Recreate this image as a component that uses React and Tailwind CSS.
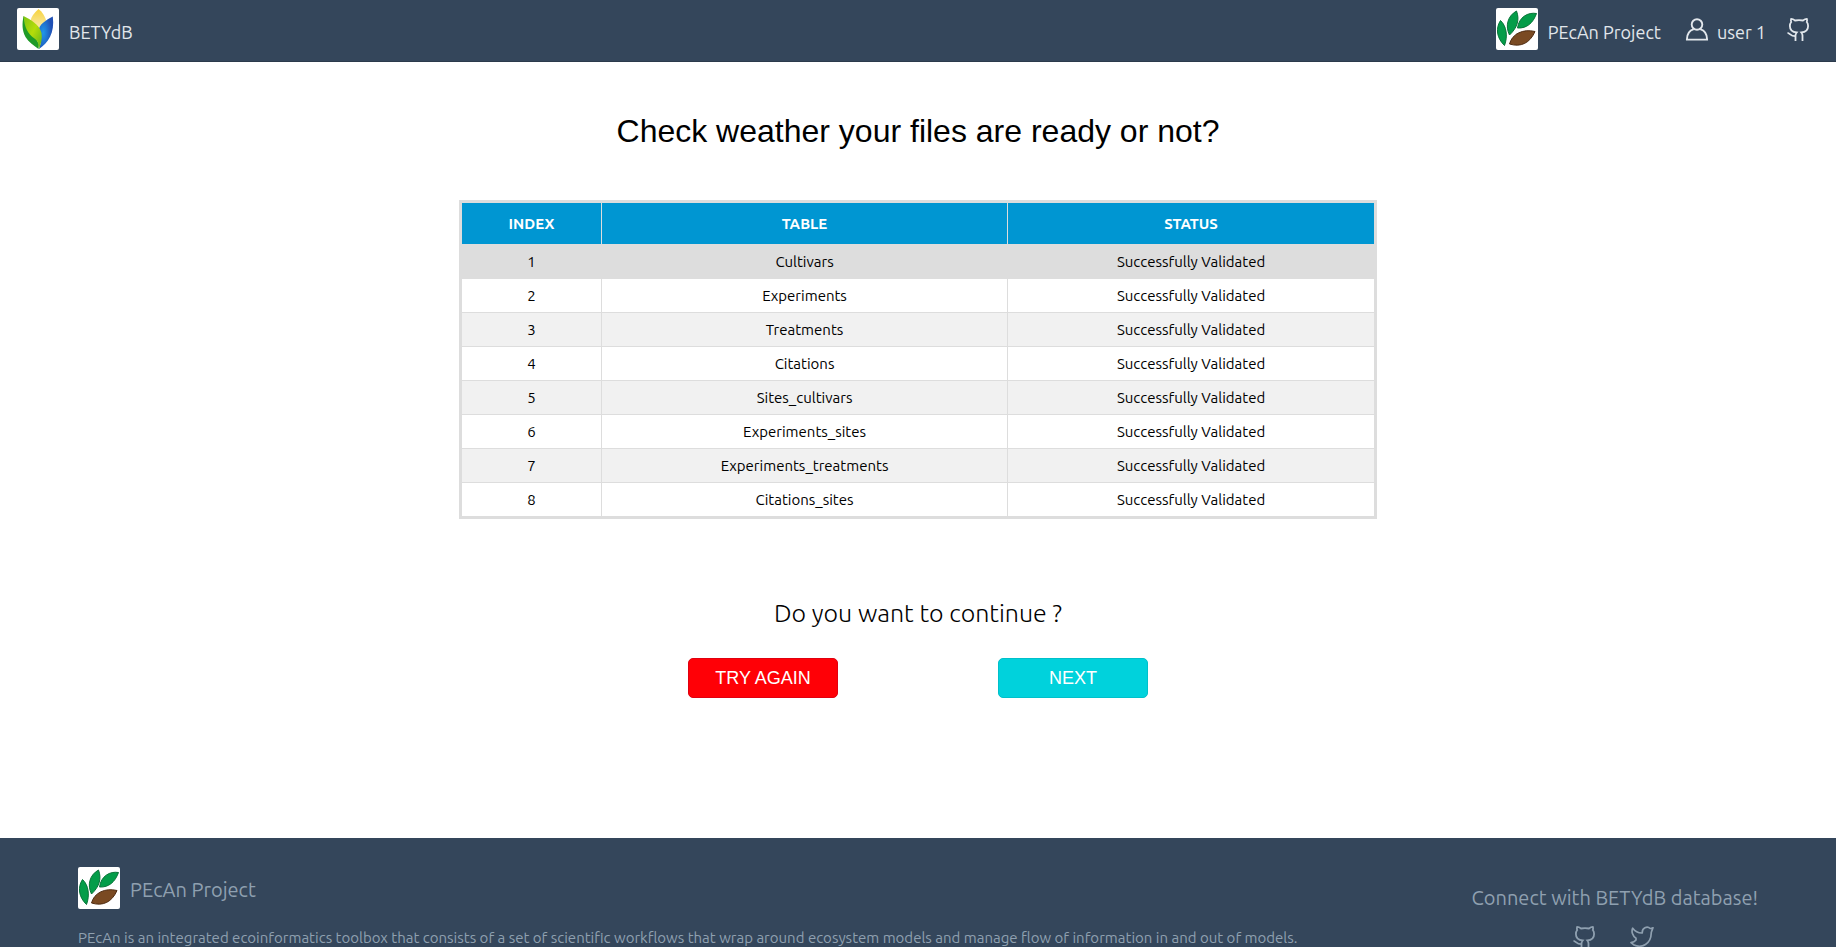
const tables = [
  "Cultivars",
  "Experiments",
  "Treatments",
  "Citations",
  "Sites_cultivars",
  "Experiments_sites",
  "Experiments_treatments",
  "Citations_sites",
];

function BetyLogo() {
  return (
    <svg viewBox="0 0 42 42" className="size-[42px] shrink-0 rounded-xs bg-white" aria-hidden="true">
      <defs>
        <linearGradient id="bety-yellow" x1="0" y1="0" x2="0" y2="1">
          <stop offset="0" stopColor="#f7d33c" />
          <stop offset="1" stopColor="#f8e9a8" />
        </linearGradient>
        <radialGradient id="bety-blue" cx="0.3" cy="0.5" r="0.6">
          <stop offset="0" stopColor="#1f97ea" />
          <stop offset="1" stopColor="#2050b4" />
        </radialGradient>
        <linearGradient id="bety-lime" x1="0" y1="0" x2="1" y2="1">
          <stop offset="0" stopColor="#7cc414" />
          <stop offset="0.5" stopColor="#b5dc0a" />
          <stop offset="1" stopColor="#5cb31c" />
        </linearGradient>
      </defs>
      <path d="M21.500 1C17 5 14 9 13.500 13L22 20L29.500 14C28.500 9 25.500 4 21.500 1Z" fill="url(#bety-yellow)" />
      <path d="M35.800 8.500C28 12.500 22.500 17 22 21C25 27 24.500 34 22 41C31 35 38 25 35.800 8.500Z" fill="url(#bety-blue)" />
      <path d="M6.500 8C5 16 5 22 8.500 29C11.500 34 16.500 37 21.500 41L22 36Z" fill="#1f9a27" />
      <path d="M6.500 8C14 12 22 16 24.500 25C25.500 30 24 36 22 41C21.500 36 21 33 17.500 30.500C11 26 7.500 20 6.500 8Z" fill="url(#bety-lime)" />
    </svg>
  );
}

function PecanLogo() {
  return (
    <svg viewBox="0 0 42 42" className="size-[42px] shrink-0 rounded-xs bg-white" aria-hidden="true">
      <g fill="#049d49" stroke="#087338" strokeWidth="1" strokeLinejoin="round">
        <path d="M4.500 12.500C-0.500 20 0.500 30 8.500 37.500C12 28 10.500 18 4.500 12.500Z" />
        <path d="M20.500 3C11.500 8 9 18 13.500 27C21 20 24 12 20.500 3Z" />
        <path d="M40.500 5.500C32 4 23 9 21.500 20C31 20.500 37 15 40.500 5.500Z" />
      </g>
      <path d="M39 23.500C27 20.500 16 26 13.500 36C25 39.500 34 35 39 23.500Z" fill="#7a4a22" stroke="#4f2c12" strokeWidth="1" strokeLinejoin="round" />
    </svg>
  );
}

function GithubIcon() {
  return (
    <svg viewBox="0 0 24 24" className="size-6" fill="none" stroke="currentColor" strokeWidth="1.8" aria-hidden="true">
      <path d="M9.500 24V18.500C9.500 17.300 9.900 16.300 10.700 15.400C6.500 15 3.900 13 3.900 8.900C3.900 7.300 4.400 6 5.200 5C4.800 3.900 4.800 2.900 5.200 1.900C6.700 1.900 8 2.700 9 3.500C11.600 2.900 14.400 2.900 17 3.500C18 2.700 19.300 1.900 20.800 1.900C21.200 2.900 21.200 3.900 20.800 5C21.700 6 22.100 7.300 22.100 8.900C22.100 13 19.500 15 15.300 15.400C16.100 16.300 16.500 17.300 16.500 18.500V24" />
      <path d="M1.500 15.800C4 16 4.200 19.300 9.500 19.200" />
    </svg>
  );
}

function TwitterIcon() {
  return (
    <svg viewBox="0 0 24 24" className="size-6" fill="none" stroke="currentColor" strokeWidth="1.7" strokeLinejoin="round" aria-hidden="true">
      <path d="M23 2.800C22 3.300 21.200 3.500 20.200 3.500C17.200 0.700 11.800 3 12.300 8C8.500 8.200 5 6.300 2.700 3.200C1.200 6.500 2.400 10.800 6 13.300L6 15C4.800 16.600 3 17.400 1 17.700L3.500 19.700C12 24 21 18.500 21.200 8.500C21.200 7.700 21.300 7 21.600 6.400Z" />
    </svg>
  );
}

function UserIcon() {
  return (
    <svg viewBox="0 0 24 24" className="size-6" fill="none" stroke="currentColor" strokeWidth="1.900" aria-hidden="true">
      <circle cx="12" cy="7.500" r="5.300" />
      <path d="M8.800 12.200C4.300 13.600 1.900 17.300 1.900 22.600H22.100C22.100 17.300 19.700 13.600 15.200 12.200" />
    </svg>
  );
}

export default function App() {
  return (
    <div className="flex h-screen flex-col overflow-hidden bg-white font-['Ubuntu','Noto_Sans',sans-serif] text-black">
      <header className="flex h-[62px] shrink-0 items-center justify-between border-b border-[#2b3a4b] bg-[#34465b] pr-[26px] pb-[3px] pl-[17px] text-lg text-[#e2e7ec]">
        <a href="#home" className="flex items-center gap-[10px]">
          <BetyLogo />
          <span className="pt-1.5">BETYdB</span>
        </a>
        <nav className="flex items-center">
          <a href="#pecan" className="flex items-center gap-[10px]">
            <PecanLogo />
            <span className="pt-1.5">PEcAn Project</span>
          </a>
          <a href="#user" className="ml-6 flex items-center gap-2">
            <UserIcon />
            <span className="pt-1.5">user 1</span>
          </a>
          <a href="#github" aria-label="GitHub" className="ml-5">
            <GithubIcon />
          </a>
        </nav>
      </header>

      <main className="flex shrink-0 flex-col items-center pb-[140px]">
        <h1 className="mt-[49px] font-['Liberation_Sans',Arial,sans-serif] text-[32px] leading-10">
          Check weather your files are ready or not?
        </h1>
        <table className="mt-[49px] w-1/2 table-fixed border-collapse border-[3px] border-[#ddd] text-center text-[15px] leading-5">
          <colgroup>
            <col className="w-[15.4%]" />
            <col className="w-[44.4%]" />
            <col />
          </colgroup>
          <thead>
            <tr className="h-[43px] bg-[#0096d2] text-white">
              <th className="border border-[#ddd] font-bold">INDEX</th>
              <th className="border border-[#ddd] font-bold">TABLE</th>
              <th className="border border-[#ddd] font-bold">STATUS</th>
            </tr>
          </thead>
          <tbody>
            {tables.map((name, i) => (
              <tr key={name} className={i === 0 ? "h-[34px] bg-[#ddd]" : "h-[34px] odd:bg-[#f1f1f1] last:h-[35px]"}>
                <td className="border border-[#ddd]">{i + 1}</td>
                <td className="border border-[#ddd]">{name}</td>
                <td className="border border-[#ddd]">Successfully Validated</td>
              </tr>
            ))}
          </tbody>
        </table>

        <h2 className="mt-[78px] text-[25px] leading-8 font-light">Do you want to continue ?</h2>
        <div className="mt-[29px] flex gap-40 font-['Liberation_Sans',Arial,sans-serif] text-lg text-white">
          <button type="button" className="h-10 w-[150px] rounded-[5px] border border-[#e00010] bg-[#ff0006]">
            TRY AGAIN
          </button>
          <button type="button" className="h-10 w-[150px] rounded-[5px] border border-[#00c0ca] bg-[#00d2dc]">
            NEXT
          </button>
        </div>
      </main>

      <footer className="flex shrink-0 justify-between bg-[#34465b] px-[78px] pt-[29px] text-[#8fa0b0]">
        <section>
          <a href="#pecan" className="flex items-center gap-[10px] text-xl">
            <PecanLogo />
            <span className="pt-1">PEcAn Project</span>
          </a>
          <p className="mt-[17px] text-[15px] leading-6">
            PEcAn is an integrated ecoinformatics toolbox that consists of a set of scientific workflows that wrap
            around ecosystem models and manage flow of information in and out of models.
          </p>
        </section>
        <section className="pt-4 text-xl">
          <h3 className="leading-[30px]">Connect with BETYdB database!</h3>
          <div className="mt-3 flex justify-center gap-[34px] pr-1">
            <a href="#github" aria-label="GitHub">
              <GithubIcon />
            </a>
            <a href="#twitter" aria-label="Twitter">
              <TwitterIcon />
            </a>
          </div>
        </section>
      </footer>
    </div>
  );
}
